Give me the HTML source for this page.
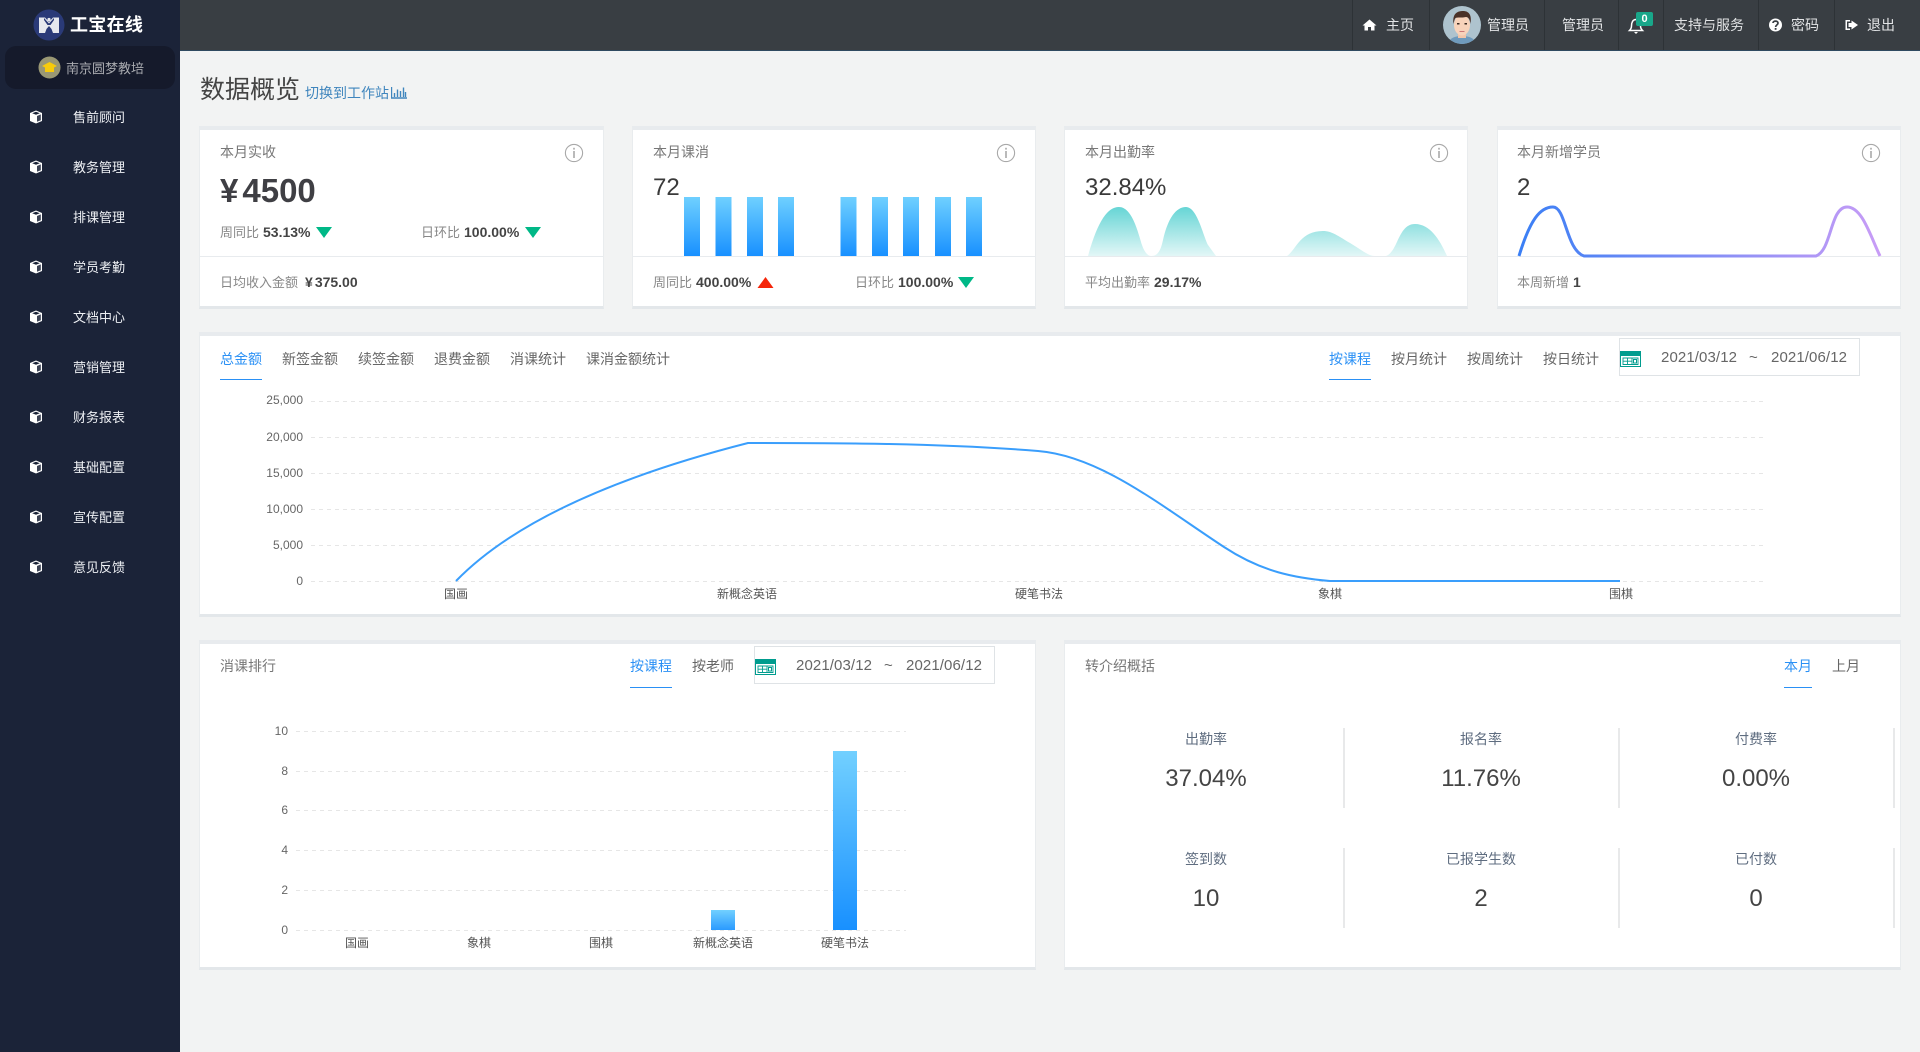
<!DOCTYPE html>
<html lang="zh">
<head>
<meta charset="utf-8">
<title>数据概览</title>
<style>
html,body{margin:0;padding:0;width:1920px;height:1052px;overflow:hidden;background:#f2f3f3;font-family:"Liberation Sans","Noto Sans CJK SC",sans-serif;}
.t{position:absolute;line-height:20px;white-space:nowrap;font-size:14px;color:#777;}
.c{transform:translateX(-50%);}
.r{text-align:right;}
.box{position:absolute;box-sizing:border-box;}
.card{position:absolute;background:#fff;box-sizing:border-box;border-top:4px solid #e8ebee;border-bottom:3px solid #e3e7ea;border-left:1px solid #e9ecee;border-right:1px solid #e9ecee;}
.m{color:#eef0f4;font-size:13px;left:73px;margin-top:1px;}
.tb{color:#e2e4e6;font-size:14px;}
.s{font-size:13px;color:#888;}
.s b{font-size:14px;color:#444;margin-left:4px;}
.v{font-size:24px;color:#3a3a3a;line-height:30px;margin-top:1px;}
.ax{font-size:12px;color:#555;margin-top:1px;}
.ay{font-size:12px;color:#666;width:50px;text-align:right;margin-top:1px;}
.tab{color:#666;font-size:14px;margin-top:1px;}
.on{color:#2a90f5;font-size:14px;margin-top:1px;}
.ul{position:absolute;height:1px;background:#2a90f5;}
.d{font-size:15px;color:#666;letter-spacing:.1px;}
.lb{font-size:14px;color:#5f6d80;margin-top:1px;}
.sv{font-size:24px;color:#444;line-height:30px;margin-top:1px;}
.dv{position:absolute;width:2px;height:80px;background:#e8e9ea;}
</style>
</head>
<body>
<!-- sidebar -->
<div class="box" style="left:0;top:0;width:180px;height:1052px;background:#1b2338"></div>
<div class="box" style="left:180px;top:0;width:1740px;height:51px;background:#393e43;border-bottom:1px solid #2f4a60"></div>
<svg class="box" style="left:33px;top:9px" width="32" height="32" viewBox="0 0 32 32">
<circle cx="16" cy="16" r="15.5" fill="#2a3a78"/>
<path d="M6 8.5 L12 8.5 L16 13 L20 8.5 L26 8.5 L26 24 L20 24 L18.5 20 L16 17 L13.5 20 L12 24 L6 24 Z" fill="#e6e8ee"/>
<path d="M11 9 L16 14.5 L21 9 L21 11 L17.5 16 L14.5 16 L11 11Z" fill="#2a3a78"/>
<circle cx="16" cy="10.5" r="1.6" fill="#e6e8ee"/>
</svg>
<div class="t" style="left:70px;top:15px;color:#fff;font-weight:700;font-size:18px;letter-spacing:.3px">工宝在线</div>
<div class="box" style="left:5px;top:46px;width:170px;height:43px;border-radius:11px;background:#151a2b"></div>
<svg class="box" style="left:38px;top:56px" width="23" height="23" viewBox="0 0 23 23">
<circle cx="11.5" cy="11.5" r="11" fill="#9a9874"/>
<path d="M4 10 L11.5 6 L19 10 L16 11.5 L16 16 L7 16 L7 11.5Z" fill="#f7cb0c"/>
</svg>
<div class="t" style="left:66px;top:58px;font-size:13px;color:#a9abb0;margin-top:1px">南京圆梦教培</div>

<svg class="box" style="left:0;top:0" width="180" height="600" viewBox="0 0 180 600">
<defs>
<g id="cube"><path d="M0 -6.5 L6 -4 L6 4 L0 6.5 L-6 4 L-6 -4Z" fill="#fff"/><path d="M-3.8 -3.8 L0 -5.2 L3.8 -3.8 L0 -2.3Z" fill="#1b2338"/><path d="M1 -1 L4.8 -2.6 L4.8 3.2 L1 4.8Z" fill="#1b2338" fill-opacity=".85"/></g>
</defs>
<use href="#cube" x="36" y="117"/><use href="#cube" x="36" y="167"/><use href="#cube" x="36" y="217"/><use href="#cube" x="36" y="267"/><use href="#cube" x="36" y="317"/><use href="#cube" x="36" y="367"/><use href="#cube" x="36" y="417"/><use href="#cube" x="36" y="467"/><use href="#cube" x="36" y="517"/><use href="#cube" x="36" y="567"/>
</svg>
<div class="t m" style="top:107px">售前顾问</div>
<div class="t m" style="top:157px">教务管理</div>
<div class="t m" style="top:207px">排课管理</div>
<div class="t m" style="top:257px">学员考勤</div>
<div class="t m" style="top:307px">文档中心</div>
<div class="t m" style="top:357px">营销管理</div>
<div class="t m" style="top:407px">财务报表</div>
<div class="t m" style="top:457px">基础配置</div>
<div class="t m" style="top:507px">宣传配置</div>
<div class="t m" style="top:557px">意见反馈</div>

<!-- topbar -->
<div class="box" style="left:1352px;top:0;width:1px;height:50px;background:#2d3236"></div>
<div class="box" style="left:1429px;top:0;width:1px;height:50px;background:#2d3236"></div>
<div class="box" style="left:1544px;top:0;width:1px;height:50px;background:#2d3236"></div>
<div class="box" style="left:1618px;top:0;width:1px;height:50px;background:#2d3236"></div>
<div class="box" style="left:1663px;top:0;width:1px;height:50px;background:#2d3236"></div>
<div class="box" style="left:1758px;top:0;width:1px;height:50px;background:#2d3236"></div>
<div class="box" style="left:1834px;top:0;width:1px;height:50px;background:#2d3236"></div>
<svg class="box" style="left:1340px;top:0" width="580" height="50" viewBox="1340 0 580 50">
<path d="M1362.5 25.5 L1369.5 19.5 L1376.5 25.5 L1374.5 25.5 L1374.5 30.5 L1371 30.5 L1371 27 L1368 27 L1368 30.5 L1364.5 30.5 L1364.5 25.5Z" fill="#fff"/>
<clipPath id="av"><circle cx="1462" cy="25" r="19"/></clipPath>
<circle cx="1462" cy="25" r="19" fill="#aec3ce"/>
<g clip-path="url(#av)">
<path d="M1448 46 C1448 38 1455 36 1462 36 C1469 36 1476 38 1476 46Z" fill="#6f9abc"/>
<rect x="1458" y="31" width="8" height="7" fill="#f2c6aa"/>
<ellipse cx="1462" cy="25" rx="8" ry="10.5" fill="#f8d3bb"/>
<path d="M1453.5 24 C1452 13 1458 11 1463 11 C1469 11 1472 15 1470.5 24 C1470 19 1468 17 1466 17 C1462 18 1457 17 1455.5 18 C1454.5 19 1454 22 1453.5 24Z" fill="#4a3128"/>
<rect x="1457" y="23" width="2.5" height="1.5" fill="#3a2a22"/><rect x="1464.5" y="23" width="2.5" height="1.5" fill="#3a2a22"/>
<rect x="1459.5" y="31" width="5" height="1" fill="#c77"/>
</g>
<path d="M1636 19.5 C1632.5 19.5 1631.5 23 1631.5 26 C1631.5 28 1630.5 29.5 1629.5 30.5 L1642.5 30.5 C1641.5 29.5 1640.5 28 1640.5 26 C1640.5 23 1639.5 19.5 1636 19.5Z" fill="none" stroke="#fff" stroke-width="1.5"/>
<path d="M1634 32 L1638 32 L1636 34Z" fill="#fff"/>
<circle cx="1775.5" cy="25" r="6.5" fill="#fff"/>
<path d="M1773 23 C1773 20.5 1778 20.5 1778 23 C1778 25 1775.6 25 1775.6 27" fill="none" stroke="#393e43" stroke-width="1.7"/>
<rect x="1774.7" y="28" width="1.8" height="1.8" fill="#393e43"/>
<path d="M1845.5 20 L1850 20 L1850 21.5 L1847 21.5 L1847 28.5 L1850 28.5 L1850 30 L1845.5 30Z" fill="#fff"/>
<path d="M1851.5 20.5 L1858 25 L1851.5 29.5 L1851.5 27 L1848.5 27 L1848.5 23 L1851.5 23Z" fill="#fff"/>
</svg>
<div class="box" style="left:1636px;top:12px;width:17px;height:14px;background:#19a78a;border-radius:2px;color:#fff;font-size:11px;font-weight:700;line-height:14px;text-align:center">0</div>
<div class="t tb" style="left:1386px;top:15px">主页</div>
<div class="t tb" style="left:1487px;top:15px">管理员</div>
<div class="t tb" style="left:1562px;top:15px">管理员</div>
<div class="t tb" style="left:1674px;top:15px">支持与服务</div>
<div class="t tb" style="left:1791px;top:15px">密码</div>
<div class="t tb" style="left:1867px;top:15px">退出</div>

<!-- heading -->
<div class="t" style="left:200px;top:75px;font-size:25px;line-height:30px;color:#444">数据概览</div>
<div class="t" style="left:305px;top:83px;color:#3f85bd">切换到工作站</div>
<svg class="box" style="left:391px;top:86px" width="16" height="13" viewBox="0 0 16 13"><path d="M0.5 1 V12 H16 M3.5 7 V11 M6.5 3.5 V11 M9.5 5 V11 M12.5 1.5 V11 M14.5 6 V11" fill="none" stroke="#3f85bd" stroke-width="1.4"/></svg>

<!-- cards -->
<div class="card" style="left:199px;top:126px;width:405px;height:183px"></div>
<div class="card" style="left:632px;top:126px;width:404px;height:183px"></div>
<div class="card" style="left:1064px;top:126px;width:404px;height:183px"></div>
<div class="card" style="left:1497px;top:126px;width:404px;height:183px"></div>
<div class="card" style="left:199px;top:332px;width:1702px;height:285px"></div>
<div class="card" style="left:199px;top:640px;width:837px;height:330px"></div>
<div class="card" style="left:1064px;top:640px;width:837px;height:330px"></div>

<!-- separators, charts -->
<svg class="box" style="left:0;top:0" width="1920" height="1052" viewBox="0 0 1920 1052">
<defs>
<linearGradient id="b1" gradientUnits="userSpaceOnUse" x1="0" y1="197" x2="0" y2="256"><stop offset="0" stop-color="#6fd0ff"/><stop offset="1" stop-color="#1890ff"/></linearGradient>
<linearGradient id="b2" gradientUnits="userSpaceOnUse" x1="0" y1="751" x2="0" y2="930"><stop offset="0" stop-color="#72d0ff"/><stop offset="1" stop-color="#1890ff"/></linearGradient>
<linearGradient id="b3" gradientUnits="userSpaceOnUse" x1="0" y1="910" x2="0" y2="930"><stop offset="0" stop-color="#72d0ff"/><stop offset="1" stop-color="#2a9aff"/></linearGradient>
<linearGradient id="ar" gradientUnits="userSpaceOnUse" x1="0" y1="207" x2="0" y2="258"><stop offset="0" stop-color="#66d5d5"/><stop offset="1" stop-color="#e8f8f8"/></linearGradient>
<linearGradient id="ln" gradientUnits="userSpaceOnUse" x1="1519" y1="0" x2="1880" y2="0"><stop offset="0" stop-color="#3a7ff5"/><stop offset="1" stop-color="#c89cf6"/></linearGradient>
<g id="info"><circle r="8.6" fill="none" stroke="#a9a9a9" stroke-width="1.1"/><rect x="-.8" y="-2" width="1.6" height="7" fill="#a9a9a9"/><rect x="-.8" y="-5.2" width="1.6" height="1.8" fill="#a9a9a9"/></g>
<g id="cal"><rect x=".5" y=".5" width="20" height="15" fill="#fff" stroke="#009c8e"/><rect x="0" y="0" width="21" height="5" fill="#009c8e"/><path d="M3 7 H18 V13.5 H3Z M7.5 7 V13.5 M12 7 V13.5 M3 10.2 H12" fill="none" stroke="#009c8e" stroke-width=".9"/><rect x="13.5" y="8.5" width="3" height="3.5" fill="none" stroke="#009c8e"/></g>
</defs>
<g fill="#e8ebee">
<rect x="200" y="256" width="403" height="1"/><rect x="633" y="256" width="402" height="1"/><rect x="1065" y="256" width="402" height="1"/><rect x="1498" y="256" width="402" height="1"/>
</g>
<use href="#info" x="574" y="153"/><use href="#info" x="1006" y="153"/><use href="#info" x="1439" y="153"/><use href="#info" x="1871" y="153"/>
<!-- triangles -->
<path d="M316 227 H332 L324 238Z M525 227 H541 L533 238Z M958 277 H974 L966 288Z" fill="#00b887"/>
<path d="M757.5 288 H773.5 L765.5 277Z" fill="#f5260a"/>
<!-- card 2 bars -->
<g fill="url(#b1)">
<rect x="684" y="197" width="16" height="59"/><rect x="715.5" y="197" width="16" height="59"/><rect x="747" y="197" width="16" height="59"/><rect x="778" y="197" width="16" height="59"/>
<rect x="840.5" y="197" width="16" height="59"/><rect x="872" y="197" width="16" height="59"/><rect x="903" y="197" width="16" height="59"/><rect x="935" y="197" width="16" height="59"/><rect x="966" y="197" width="16" height="59"/>
</g>
<!-- card 3 area -->
<path fill="url(#ar)" d="M1088 256 C1098 220 1108 207 1119 207 C1132 207 1138 232 1142 245 C1145 254 1149 256 1151 256 C1156 256 1160 254 1163 240 C1168 218 1176 207 1186 207 C1197 207 1203 235 1208 245 L1216 256Z M1287 256 C1296 250 1300 231 1323 231 C1332 231 1338 236 1350 243 C1362 250 1368 256 1375 256Z M1386 256 C1398 252 1398 224 1415 224 C1430 224 1440 240 1447 256Z"/>
<!-- card 4 line -->
<path fill="none" stroke="url(#ln)" stroke-width="3" d="M1519 256 C1530 220 1540 207 1553 207 C1566 207 1566 250 1584 256 L1816 256 C1832 250 1830 207 1847 207 C1862 207 1870 235 1880 256"/>
<!-- main chart grid -->
<g stroke="#e6e6e6" stroke-dasharray="4 4" stroke-width="1">
<path d="M311 401.5 H1763 M311 437.5 H1763 M311 473.5 H1763 M311 509.5 H1763 M311 545.5 H1763 M311 581.5 H1763"/>
<path d="M296 731.5 H906 M296 771.5 H906 M296 810.5 H906 M296 850.5 H906 M296 890.5 H906 M296 930.5 H906"/>
</g>
<path fill="none" stroke="#3a9efc" stroke-width="2" d="M456 581 C525 510 650 468 748 443 C830 443 940 443 1038 451 C1100 456 1160 505 1224 547 C1262 572 1295 578 1330 581 L1620 581"/>
<!-- bars -->
<rect x="711" y="910" width="24" height="20" fill="url(#b3)"/>
<rect x="833" y="751" width="24" height="179" fill="url(#b2)"/>
<!-- date boxes -->
<rect x="1619.5" y="338.5" width="240" height="37" fill="#fff" stroke="#dfe3e6"/>
<rect x="754.5" y="646.5" width="240" height="37" fill="#fff" stroke="#dfe3e6"/>
<use href="#cal" x="1620" y="351"/><use href="#cal" x="755" y="659"/>
</svg>

<!-- card text -->
<div class="t" style="left:220px;top:142px">本月实收</div>
<div class="t" style="left:653px;top:142px">本月课消</div>
<div class="t" style="left:1085px;top:142px">本月出勤率</div>
<div class="t" style="left:1517px;top:142px">本月新增学员</div>
<div class="t" style="left:220px;top:171px;font-size:33px;line-height:40px;font-weight:700;color:#3f3f44"><span style="margin-right:4px">¥</span>4500</div>
<div class="t v" style="left:653px;top:172px">72</div>
<div class="t v" style="left:1085px;top:172px">32.84%</div>
<div class="t v" style="left:1517px;top:172px">2</div>
<div class="t s" style="left:220px;top:222px">周同比<b>53.13%</b></div>
<div class="t s" style="left:421px;top:222px">日环比<b>100.00%</b></div>
<div class="t s" style="left:220px;top:272px">日均收入金额<b style="margin-left:7px"><span style="margin-right:2px">¥</span>375.00</b></div>
<div class="t s" style="left:653px;top:272px">周同比<b>400.00%</b></div>
<div class="t s" style="left:855px;top:272px">日环比<b>100.00%</b></div>
<div class="t s" style="left:1085px;top:272px">平均出勤率<b>29.17%</b></div>
<div class="t s" style="left:1517px;top:272px">本周新增<b>1</b></div>

<!-- main chart tabs -->
<div class="t on" style="left:220px;top:348px">总金额</div>
<div class="ul" style="left:220px;top:379px;width:42px"></div>
<div class="t tab" style="left:282px;top:348px">新签金额</div>
<div class="t tab" style="left:358px;top:348px">续签金额</div>
<div class="t tab" style="left:434px;top:348px">退费金额</div>
<div class="t tab" style="left:510px;top:348px">消课统计</div>
<div class="t tab" style="left:586px;top:348px">课消金额统计</div>
<div class="t on" style="left:1329px;top:348px">按课程</div>
<div class="ul" style="left:1329px;top:379px;width:42px"></div>
<div class="t tab" style="left:1391px;top:348px">按月统计</div>
<div class="t tab" style="left:1467px;top:348px">按周统计</div>
<div class="t tab" style="left:1543px;top:348px">按日统计</div>
<div class="t d" style="left:1661px;top:348px">2021/03/12</div>
<div class="t d" style="left:1749px;top:348px">~</div>
<div class="t d" style="left:1771px;top:348px">2021/06/12</div>

<div class="t ay" style="left:253px;top:389px">25,000</div>
<div class="t ay" style="left:253px;top:426px">20,000</div>
<div class="t ay" style="left:253px;top:462px">15,000</div>
<div class="t ay" style="left:253px;top:498px">10,000</div>
<div class="t ay" style="left:253px;top:534px">5,000</div>
<div class="t ay" style="left:253px;top:570px">0</div>
<div class="t ax c" style="left:456px;top:583px">国画</div>
<div class="t ax c" style="left:747px;top:583px">新概念英语</div>
<div class="t ax c" style="left:1039px;top:583px">硬笔书法</div>
<div class="t ax c" style="left:1330px;top:583px">象棋</div>
<div class="t ax c" style="left:1621px;top:583px">围棋</div>

<!-- ranking card -->
<div class="t" style="left:220px;top:656px">消课排行</div>
<div class="t on" style="left:630px;top:655px">按课程</div>
<div class="ul" style="left:630px;top:687px;width:42px"></div>
<div class="t tab" style="left:692px;top:655px">按老师</div>
<div class="t d" style="left:796px;top:656px">2021/03/12</div>
<div class="t d" style="left:884px;top:656px">~</div>
<div class="t d" style="left:906px;top:656px">2021/06/12</div>
<div class="t ay" style="left:238px;top:720px">10</div>
<div class="t ay" style="left:238px;top:760px">8</div>
<div class="t ay" style="left:238px;top:799px">6</div>
<div class="t ay" style="left:238px;top:839px">4</div>
<div class="t ay" style="left:238px;top:879px">2</div>
<div class="t ay" style="left:238px;top:919px">0</div>
<div class="t ax c" style="left:357px;top:932px">国画</div>
<div class="t ax c" style="left:479px;top:932px">象棋</div>
<div class="t ax c" style="left:601px;top:932px">围棋</div>
<div class="t ax c" style="left:723px;top:932px">新概念英语</div>
<div class="t ax c" style="left:845px;top:932px">硬笔书法</div>

<!-- referral card -->
<div class="t" style="left:1085px;top:656px">转介绍概括</div>
<div class="t on" style="left:1784px;top:655px">本月</div>
<div class="ul" style="left:1784px;top:687px;width:28px"></div>
<div class="t tab" style="left:1832px;top:655px">上月</div>
<div class="dv" style="left:1343px;top:728px"></div>
<div class="dv" style="left:1618px;top:728px"></div>
<div class="dv" style="left:1893px;top:728px"></div>
<div class="dv" style="left:1343px;top:848px"></div>
<div class="dv" style="left:1618px;top:848px"></div>
<div class="dv" style="left:1893px;top:848px"></div>
<div class="t lb c" style="left:1206px;top:728px">出勤率</div>
<div class="t lb c" style="left:1481px;top:728px">报名率</div>
<div class="t lb c" style="left:1756px;top:728px">付费率</div>
<div class="t sv c" style="left:1206px;top:763px">37.04%</div>
<div class="t sv c" style="left:1481px;top:763px">11.76%</div>
<div class="t sv c" style="left:1756px;top:763px">0.00%</div>
<div class="t lb c" style="left:1206px;top:848px">签到数</div>
<div class="t lb c" style="left:1481px;top:848px">已报学生数</div>
<div class="t lb c" style="left:1756px;top:848px">已付数</div>
<div class="t sv c" style="left:1206px;top:883px">10</div>
<div class="t sv c" style="left:1481px;top:883px">2</div>
<div class="t sv c" style="left:1756px;top:883px">0</div>
</body>
</html>
